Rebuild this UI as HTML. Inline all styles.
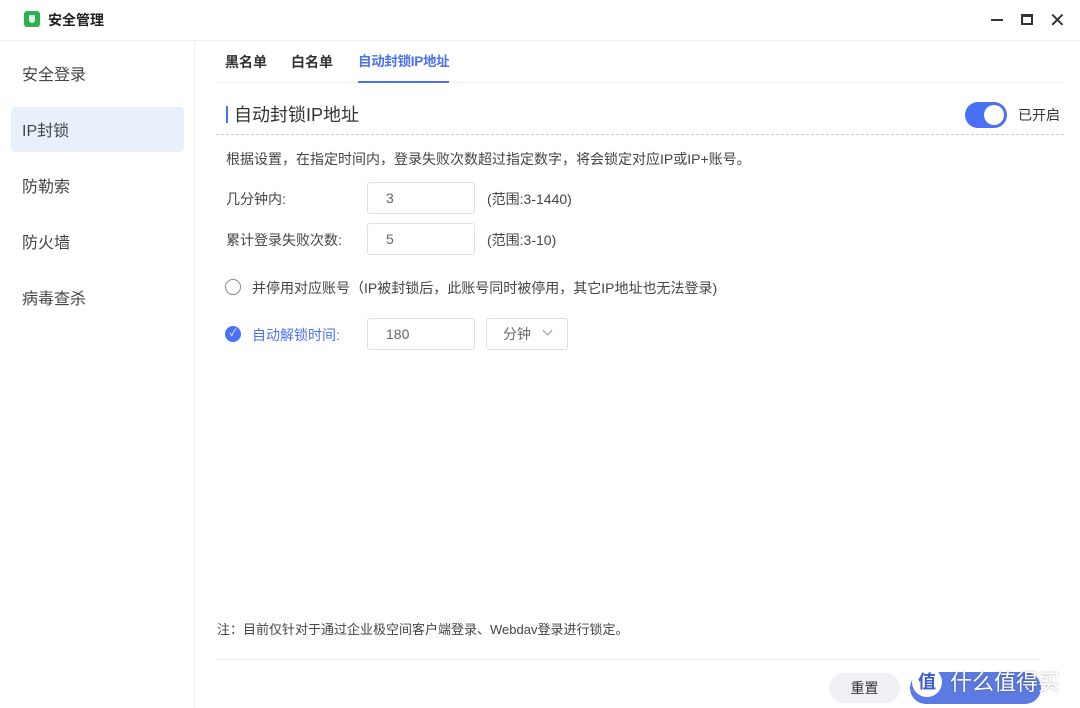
<!DOCTYPE html>
<html><head><meta charset="utf-8"><style>
*{margin:0;padding:0;box-sizing:border-box}
body{width:1080px;height:708px;background:#fff;font-family:"Liberation Sans","Noto Sans CJK SC",sans-serif;color:#333;position:relative;overflow:hidden;line-height:1.3}
.a{position:absolute}
.t{font-size:14px;color:#444}
.inp{position:absolute;width:108px;height:32px;border:1px solid #dcdfe6;border-radius:3px;font-size:14px;color:#666;padding:6px 18px}
</style></head><body>
<div class="a" style="left:24px;top:11px;width:16px;height:16px;background:#2bb24c;border-radius:3px"></div>
<div class="a" style="left:29px;top:15px;width:6px;height:8px;background:#dff5e4;border-radius:1px 1px 4px 4px"></div>
<div class="a" style="left:48px;top:11px;font-size:14px;font-weight:bold;color:#222">安全管理</div>
<div class="a" style="left:991px;top:19px;width:12px;height:2px;background:#333"></div>
<div class="a" style="left:1021px;top:14px;width:12px;height:11px;border:2px solid #333;border-top-width:3px"></div>
<div class="a" style="left:1049px;top:8px;font-size:20px;color:#333">✕</div>
<div class="a" style="left:0;top:40px;width:1080px;height:1px;background:#eee"></div>
<div class="a" style="left:194px;top:41px;width:1px;height:667px;background:#eee"></div>
<div class="a" style="left:22px;top:66px;font-size:16px;color:#444">安全登录</div>
<div class="a" style="left:11px;top:107px;width:173px;height:45px;background:#e8f0fc;border-radius:4px"></div>
<div class="a" style="left:22px;top:122px;font-size:16px;color:#444">IP封锁</div>
<div class="a" style="left:22px;top:178px;font-size:16px;color:#444">防勒索</div>
<div class="a" style="left:22px;top:234px;font-size:16px;color:#444">防火墙</div>
<div class="a" style="left:22px;top:290px;font-size:16px;color:#444">病毒查杀</div>
<div class="a" style="left:225px;top:53px;font-size:14px;font-weight:bold;color:#333">黑名单</div>
<div class="a" style="left:291px;top:53px;font-size:14px;font-weight:bold;color:#333">白名单</div>
<div class="a" style="left:358px;top:53px;font-size:13.5px;font-weight:bold;color:#4a70f5;letter-spacing:-0.3px">自动封锁IP地址</div>
<div class="a" style="left:216px;top:82px;width:848px;height:1px;background:#eee"></div>
<div class="a" style="left:358px;top:81px;width:91px;height:2px;background:#4a70f5"></div>
<div class="a" style="left:226px;top:106px;width:2px;height:17px;background:#4a70f5"></div>
<div class="a" style="left:234px;top:104px;font-size:18px;color:#333">自动封锁IP地址</div>
<div class="a" style="left:965px;top:102px;width:42px;height:26px;background:#4a70f5;border-radius:13px"></div>
<div class="a" style="left:984px;top:105px;width:20px;height:20px;background:#fff;border-radius:50%"></div>
<div class="a" style="left:1018px;top:106px;font-size:14px;color:#333">已开启</div>
<div class="a" style="left:216px;top:134px;width:848px;border-top:1px dashed #ccc"></div>
<div class="a t" style="left:226px;top:150px">根据设置，在指定时间内，登录失败次数超过指定数字，将会锁定对应IP或IP+账号。</div>
<div class="a t" style="left:226px;top:190px">几分钟内:</div>
<div class="inp" style="left:367px;top:182px">3</div>
<div class="a t" style="left:487px;top:190px">(范围:3-1440)</div>
<div class="a t" style="left:226px;top:231px">累计登录失败次数:</div>
<div class="inp" style="left:367px;top:223px">5</div>
<div class="a t" style="left:487px;top:231px">(范围:3-10)</div>
<div class="a" style="left:225px;top:279px;width:16px;height:16px;border:1px solid #888;border-radius:50%"></div>
<div class="a t" style="left:252px;top:279px">并停用对应账号（IP被封锁后，此账号同时被停用，其它IP地址也无法登录)</div>
<div class="a" style="left:225px;top:326px;width:16px;height:16px;background:#4a70f5;border-radius:50%;color:#fff;font-size:10px;text-align:center;line-height:16px">✓</div>
<div class="a" style="left:252px;top:326px;font-size:14px;color:#4a70f5">自动解锁时间:</div>
<div class="inp" style="left:367px;top:318px">180</div>
<div class="inp" style="left:486px;top:318px;width:82px;padding-left:16px">分钟</div>
<div class="a" style="left:544px;top:327px;width:7px;height:7px;border-right:1px solid #999;border-bottom:1px solid #999;transform:rotate(45deg)"></div>
<div class="a" style="left:217px;top:622px;font-size:13px;color:#444">注：目前仅针对于通过企业极空间客户端登录、Webdav登录进行锁定。</div>
<div class="a" style="left:216px;top:659px;width:824px;height:1px;background:#eee"></div>
<div class="a" style="left:829px;top:673px;width:71px;height:30px;background:#eef0f4;border-radius:15px;font-size:14px;text-align:center;line-height:30px;color:#333">重置</div>
<div class="a" style="left:910px;top:672px;width:131px;height:32px;background:#5b7be3;border-radius:16px"></div>
<div class="a" style="left:912px;top:667px;width:30px;height:30px;background:#fff;border-radius:50%;color:#3a5ad0;font-size:18px;font-weight:bold;text-align:center;line-height:30px">值</div>
<div class="a" style="left:950px;top:669px;font-size:22px;color:#fff;text-shadow:0 0 2px rgba(0,0,0,.35)">什么值得买</div>
</body></html>
